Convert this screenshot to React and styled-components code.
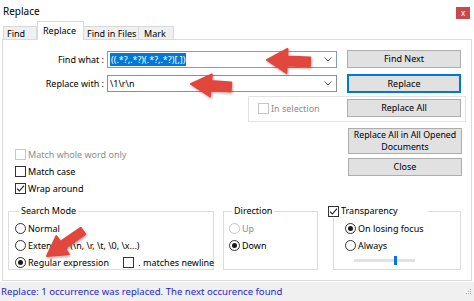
import React from "react";
import styled, { createGlobalStyle } from "styled-components";

const FONT = `"Noto Sans", "Open Sans", sans-serif`;

const Global = createGlobalStyle`
  html, body { margin: 0; padding: 0; background: #fff; }
  body { font-family: ${FONT}; font-size: 9px; color: #000; }
`;

const Window = styled.div`
  position: relative;
  width: 474px;
  height: 301px;
  display: flex;
  flex-direction: column;
  background: #fff;
  overflow: hidden;
`;

const TitleBar = styled.div`
  height: 22px;
  flex: none;
  display: flex;
  align-items: center;
  justify-content: space-between;
  padding: 0 4px 0 3px;
  box-sizing: border-box;
`;

const Title = styled.span`
  font-size: 10px;
  margin-top: -1px;
`;

const CloseBtn = styled.span`
  width: 14px;
  height: 12px;
  margin-top: 3px;
  background: #c9474e;
  color: #fff;
  font-size: 8px;
  line-height: 11px;
  text-align: center;
`;

const TabRow = styled.div`
  height: 18px;
  flex: none;
  display: flex;
  align-items: flex-end;
  padding-left: 3px;
  margin-bottom: -1px;
  position: relative;
  z-index: 1;
`;

const Tab = styled.div`
  width: ${(p) => p.$w}px;
  height: ${(p) => (p.$active ? 19 : 14)}px;
  box-sizing: border-box;
  padding: ${(p) => (p.$active ? "0 0 1px" : "0")} ${(p) => p.$pl}px;
  background: ${(p) => (p.$active ? "#fff" : "#f0f0f0")};
  border: 1px solid #d9d9d9;
  border-left-width: ${(p) => (p.$noLeft ? 0 : 1)}px;
  border-bottom: ${(p) => (p.$active ? "none" : "1px solid #d9d9d9")};
  display: flex;
  align-items: center;
  flex: none;
  white-space: nowrap;
`;

const Panel = styled.div`
  height: 242px;
  flex: none;
  margin: 0 2px;
  box-sizing: border-box;
  border: 1px solid #dadada;
  background: #fff;
  display: flex;
  flex-direction: column;
`;

const FieldRow = styled.div`
  display: flex;
  align-items: center;
  height: ${(p) => p.$h}px;
  margin-top: ${(p) => p.$mt}px;
`;

const Label = styled.span`
  width: 101px;
  margin-right: 3px;
  text-align: right;
  white-space: nowrap;
`;

const Combo = styled.div`
  width: 230px;
  height: 17px;
  box-sizing: border-box;
  border: 1px solid ${(p) => p.$border};
  background: #fff;
  display: flex;
  align-items: center;
  justify-content: space-between;
  padding: 0 4px 0 2px;
  margin-right: 10px;
  white-space: nowrap;
`;

const Selected = styled.span`
  background: #0078d7;
  color: #fff;
  padding: 0 1px;
  line-height: 13px;
`;

const Btn = styled.div`
  width: 114px;
  height: ${(p) => p.$h || 18}px;
  box-sizing: border-box;
  border: 1px solid ${(p) => (p.$focus ? "#0078d7" : "#adadad")};
  box-shadow: ${(p) => (p.$focus ? "inset 0 0 0 1px #0078d7" : "none")};
  background: #e1e1e1;
  display: flex;
  flex-direction: column;
  align-items: center;
  justify-content: center;
  text-align: center;
  line-height: 12px;
  flex: none;
`;

const BtnLine = styled.span`
  display: block;
  font-size: 8.8px;
  height: 12px;
  line-height: 12px;
  white-space: nowrap;
`;

const SelectionBox = styled.div`
  margin: 3px 0 0 245px;
  width: 218px;
  height: 26px;
  box-sizing: border-box;
  border: 1px solid #e3e3e3;
  display: flex;
  align-items: flex-start;
  justify-content: space-between;
  padding: 2px 4px 0 9px;
`;

const LowerArea = styled.div`
  display: flex;
  justify-content: space-between;
`;

const OptionsCol = styled.div`
  display: flex;
  flex-direction: column;
  gap: 3px;
  padding: ${(p) => p.$pad};
`;

const ButtonCol = styled.div`
  display: flex;
  flex-direction: column;
  gap: 4px;
  padding-top: 6px;
  margin-right: 9px;
`;

const Option = styled.label`
  display: flex;
  align-items: center;
  gap: 2px;
  height: 14px;
  white-space: nowrap;
  color: ${(p) => (p.$disabled ? "#8d8d8d" : "#000")};
  margin-top: ${(p) => p.$mt || 0}px;
`;

const BoxMark = styled.span`
  width: 11px;
  height: 11px;
  box-sizing: border-box;
  border: 1px solid ${(p) => (p.$disabled ? "#c6c6c6" : "#333")};
  background: #fff;
  display: inline-flex;
  align-items: center;
  justify-content: center;
  flex: none;
  margin-left: ${(p) => p.$ml || 0}px;
`;

const RadioMark = styled.span`
  width: 11px;
  height: 11px;
  box-sizing: border-box;
  border-radius: 50%;
  border: 1px solid ${(p) => (p.$disabled ? "#c6c6c6" : "#333")};
  background: #fff;
  display: inline-flex;
  align-items: center;
  justify-content: center;
  flex: none;
  &::after {
    content: "";
    width: 5px;
    height: 5px;
    border-radius: 50%;
    background: #1a1a1a;
    display: ${(p) => (p.$on ? "block" : "none")};
  }
`;

const GroupRow = styled.div`
  display: flex;
  align-items: flex-start;
  padding-left: 5px;
  margin-top: 9px;
`;

const Group = styled.fieldset`
  margin: 0 ${(p) => p.$mr}px 0 0;
  width: ${(p) => p.$w}px;
  height: 66px;
  box-sizing: border-box;
  border: 1px solid #dcdcdc;
  padding: 0 0 0 ${(p) => p.$pl}px;
  min-width: 0;
`;

const Legend = styled.legend`
  padding: 0 ${(p) => p.$pr || 2}px 0 2px;
  margin-left: ${(p) => p.$ml}px;
  line-height: 14px;
  display: flex;
  align-items: center;
  gap: 2px;
`;

const SliderRow = styled.div`
  display: flex;
  align-items: center;
  height: 10px;
  padding-left: 9px;
`;

const Track = styled.div`
  width: 61px;
  height: 3px;
  background: #e2e2e2;
  display: flex;
  align-items: center;
  padding-left: 40px;
  box-sizing: border-box;
`;

const Thumb = styled.div`
  width: 3px;
  height: 9px;
  background: #0078d7;
  flex: none;
`;

const StatusBar = styled.div`
  height: 19px;
  flex: none;
  margin-top: 1px;
  background: #f0f0f0;
  color: #2424d6;
  font-size: 9.6px;
  display: flex;
  align-items: center;
  justify-content: space-between;
  padding: 0 2px 0 1px;
`;

const Overlay = styled.svg`
  position: absolute;
  left: 0;
  top: 0;
  pointer-events: none;
`;

const Tick = () => (
  <svg width="9" height="9" viewBox="0 0 9 9">
    <path d="M1 4.6 L3.4 7 L8 1.6" fill="none" stroke="#1a1a1a" strokeWidth="1.1" />
  </svg>
);

function Checkbox({ checked, disabled, children, mt }) {
  return (
    <Option $disabled={disabled} $mt={mt}>
      <BoxMark $disabled={disabled}>{checked && <Tick />}</BoxMark>
      {children}
    </Option>
  );
}

function Radio({ on, disabled, children }) {
  return (
    <Option $disabled={disabled}>
      <RadioMark $on={on} $disabled={disabled} />
      {children}
    </Option>
  );
}

const Chevron = () => (
  <svg width="8" height="5" viewBox="0 0 8 5">
    <path d="M0.5 0.5 L4 4 L7.5 0.5" fill="none" stroke="#555" strokeWidth="1" />
  </svg>
);

function arrowPoints([tx, ty], [hx, hy], shaft, headLen, headW) {
  const dx = hx - tx;
  const dy = hy - ty;
  const len = Math.hypot(dx, dy);
  const ux = dx / len;
  const uy = dy / len;
  const nx = -uy;
  const ny = ux;
  const bx = hx - ux * headLen;
  const by = hy - uy * headLen;
  const pts = [
    [tx + (nx * shaft) / 2, ty + (ny * shaft) / 2],
    [bx + (nx * shaft) / 2, by + (ny * shaft) / 2],
    [bx + (nx * headW) / 2, by + (ny * headW) / 2],
    [hx, hy],
    [bx - (nx * headW) / 2, by - (ny * headW) / 2],
    [bx - (nx * shaft) / 2, by - (ny * shaft) / 2],
    [tx - (nx * shaft) / 2, ty - (ny * shaft) / 2],
  ];
  return pts.map((p) => p.map((v) => v.toFixed(1)).join(",")).join(" ");
}

const arrows = [
  { tail: [310, 62], tip: [267, 60], shaft: 9, hl: 20, hw: 24 },
  { tail: [231, 87], tip: [191, 84], shaft: 9, hl: 20, hw: 22 },
  { tail: [83, 231], tip: [47, 256], shaft: 8, hl: 19, hw: 22 },
];

export default function App() {
  return (
    <>
      <Global />
      <Window>
        <TitleBar>
          <Title>Replace</Title>
          <CloseBtn>x</CloseBtn>
        </TitleBar>
        <TabRow>
          <Tab $w={34} $pl={3}>Find</Tab>
          <Tab $active $w={47} $pl={5}>Replace</Tab>
          <Tab $w={55} $pl={3} $noLeft>Find in Files</Tab>
          <Tab $w={35} $pl={5} $noLeft>Mark</Tab>
        </TabRow>
        <Panel>
          <FieldRow $h={18} $mt={10}>
            <Label>Find what :</Label>
            <Combo $border="#7d9ccc">
              <Selected>((.*?,.*?)(.*?,.*?)[,])</Selected>
              <Chevron />
            </Combo>
            <Btn>Find Next</Btn>
          </FieldRow>
          <FieldRow $h={19} $mt={6}>
            <Label>Replace with :</Label>
            <Combo $border="#8e8e8e">
              <span>\1\r\n</span>
              <Chevron />
            </Combo>
            <Btn $focus $h={19}>Replace</Btn>
          </FieldRow>
          <SelectionBox>
            <Checkbox disabled mt={2}>In selection</Checkbox>
            <Btn>Replace All</Btn>
          </SelectionBox>
          <LowerArea>
            <OptionsCol $pad="25px 0 0 12px">
              <Checkbox disabled>Match whole word only</Checkbox>
              <Checkbox>Match case</Checkbox>
              <Checkbox checked>Wrap around</Checkbox>
            </OptionsCol>
            <ButtonCol>
              <Btn $h={26}>
                <BtnLine>Replace All in All Opened</BtnLine>
                <BtnLine>Documents</BtnLine>
              </Btn>
              <Btn>Close</Btn>
            </ButtonCol>
          </LowerArea>
          <GroupRow>
            <Group $w={206} $mr={9} $pl={6}>
              <Legend $ml={4}>Search Mode</Legend>
              <OptionsCol $pad="3px 0 0 0">
                <Radio>Normal</Radio>
                <Radio>Extended (\n, \r, \t, \0, \x...)</Radio>
                <Option>
                  <RadioMark $on />
                  Regular expression
                  <BoxMark $ml={12} />
                  &nbsp;. matches newline
                </Option>
              </OptionsCol>
            </Group>
            <Group $w={95} $mr={15} $pl={5}>
              <Legend $ml={3}>Direction</Legend>
              <OptionsCol $pad="3px 0 0 0">
                <Radio disabled>Up</Radio>
                <Radio on>Down</Radio>
              </OptionsCol>
            </Group>
            <Group $w={128} $mr={0} $pl={11}>
              <Legend $ml={-19} $pr={30}>
                <BoxMark>
                  <Tick />
                </BoxMark>
                Transparency
              </Legend>
              <OptionsCol $pad="3px 0 0 0">
                <Radio on>On losing focus</Radio>
                <Radio>Always</Radio>
                <SliderRow>
                  <Track>
                    <Thumb />
                  </Track>
                </SliderRow>
              </OptionsCol>
            </Group>
          </GroupRow>
        </Panel>
        <StatusBar>
          <span>Replace: 1 occurrence was replaced. The next occurence found</span>
          <svg width="6" height="6" viewBox="0 0 6 6">
            <rect x="4" y="0" width="1" height="1" fill="#aaa" />
            <rect x="2" y="2" width="1" height="1" fill="#aaa" />
            <rect x="4" y="2" width="1" height="1" fill="#aaa" />
            <rect x="0" y="4" width="1" height="1" fill="#aaa" />
            <rect x="2" y="4" width="1" height="1" fill="#aaa" />
            <rect x="4" y="4" width="1" height="1" fill="#aaa" />
          </svg>
        </StatusBar>
        <Overlay width="474" height="301" viewBox="0 0 474 301">
          <defs>
            <filter id="sh" x="-20%" y="-20%" width="140%" height="140%">
              <feDropShadow dx="1" dy="1.5" stdDeviation="1" floodColor="#000" floodOpacity="0.3" />
            </filter>
          </defs>
          {arrows.map((a, i) => (
            <polygon
              key={i}
              points={arrowPoints(a.tail, a.tip, a.shaft, a.hl, a.hw)}
              fill="#e2463d"
              strokeLinejoin="round"
              stroke="#e2463d"
              strokeWidth="2"
              filter="url(#sh)"
            />
          ))}
        </Overlay>
      </Window>
    </>
  );
}
